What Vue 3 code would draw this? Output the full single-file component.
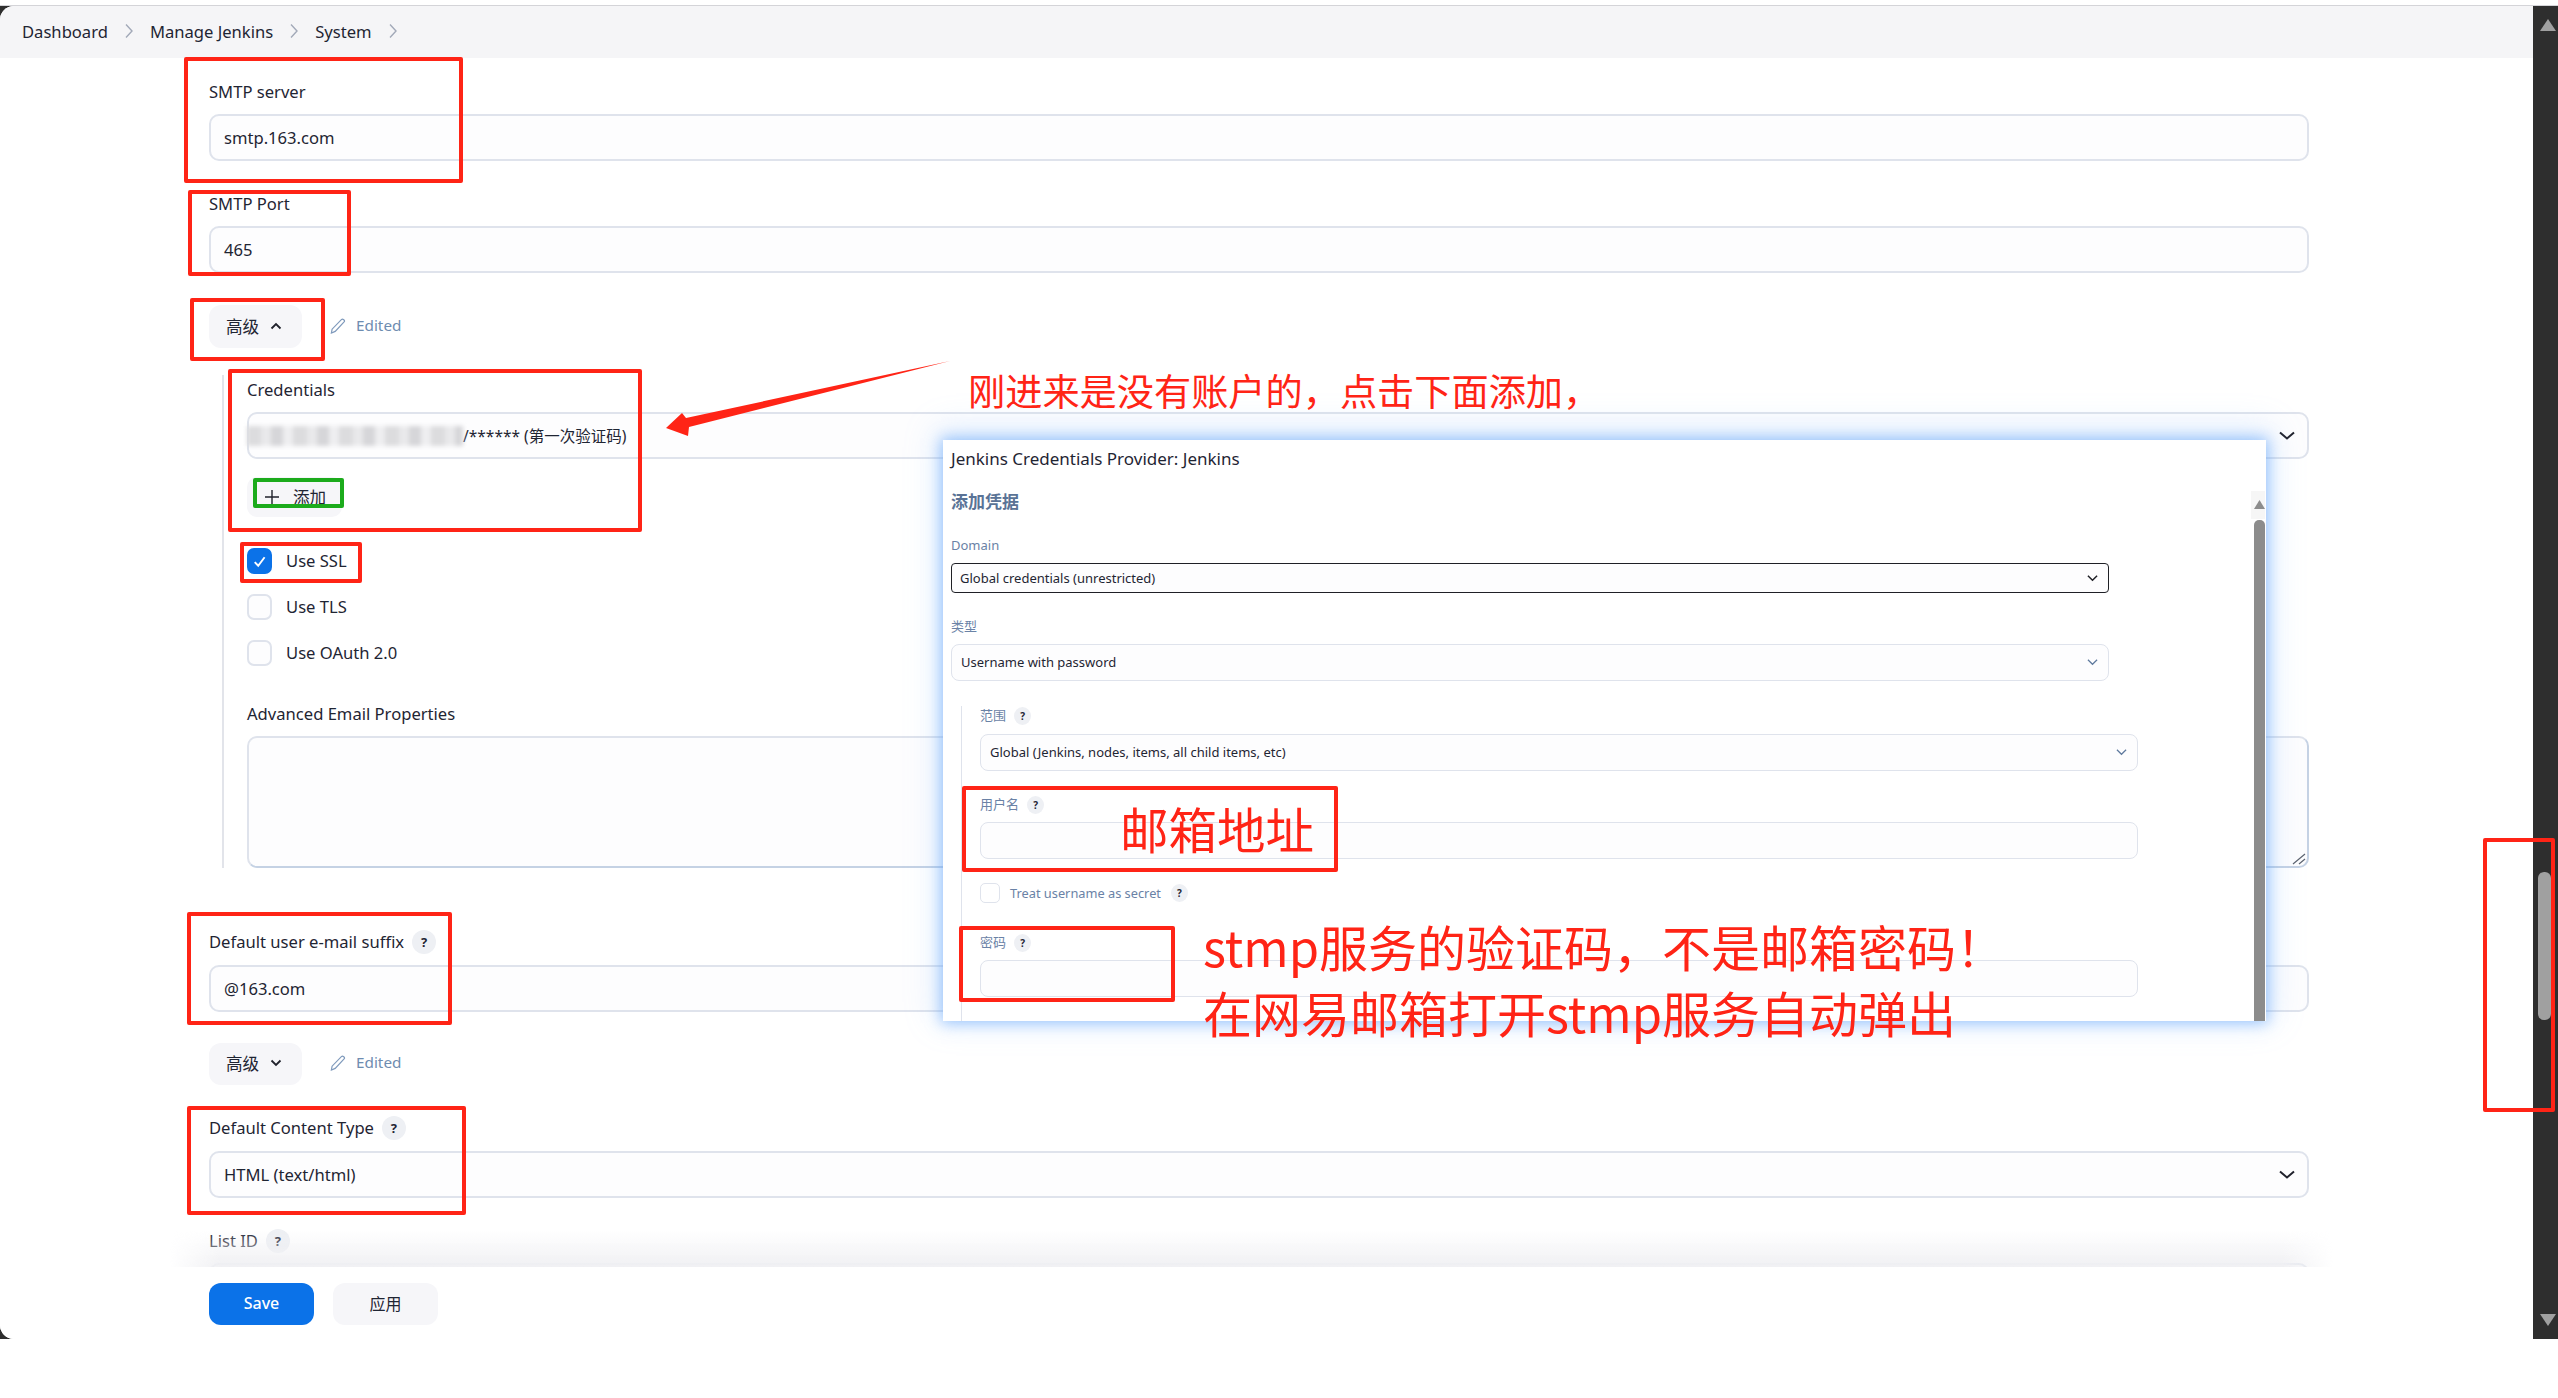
<script setup>
const crumbs = ['Dashboard', 'Manage Jenkins', 'System']
const boxes = ['b-server', 'b-port', 'b-adv', 'b-cred', 'b-ssl', 'b-suffix', 'b-type', 'b-user', 'b-pass', 'b-scroll']
</script>

<template>
  <div class="screen">
    <div class="window">
      <div class="main">
        <nav class="crumbs">
          <template v-for="c in crumbs" :key="c">
            <span>{{ c }}</span>
            <svg class="crumb-sep" viewBox="0 0 8 16"><path d="M1 1.5 7 8 1 14.5" /></svg>
          </template>
        </nav>

        <div class="content">
          <div class="form">
            <section>
              <div class="label">SMTP server</div>
              <div class="input">smtp.163.com</div>
            </section>
            <section>
              <div class="label">SMTP Port</div>
              <div class="input">465</div>
            </section>

            <div class="adv-row up">
              <button class="adv">高级
                <svg viewBox="0 0 12 8"><path d="M1.5 6.5 6 2l4.5 4.5" /></svg>
              </button>
              <svg class="pencil" viewBox="0 0 16 16"><path d="M11.6 1.4c1.2-.9 3.6 1 2.7 2.3L5.2 13.4 1.4 15l.7-3.8z" /></svg>
              <span class="edited">Edited</span>
            </div>

            <div class="nested">
              <div class="label">Credentials</div>
              <div class="input select">
                <span class="cred-value"><i class="redacted"></i>/****** (第一次验证码)</span>
                <svg class="chev" viewBox="0 0 16 9"><path d="M1 1.5 8 7.5l7-6" /></svg>
              </div>
              <button class="add">
                <svg viewBox="0 0 14 14"><path d="M7 0v14M0 7h14" /></svg>
                添加
              </button>
              <label class="check first">
                <span class="box on">
                  <svg viewBox="0 0 16 16"><path d="M3.5 8.5 6.8 12l6-8" /></svg>
                </span>
                Use SSL
              </label>
              <label class="check"><span class="box"></span>Use TLS</label>
              <label class="check"><span class="box"></span>Use OAuth 2.0</label>
              <div class="label props">Advanced Email Properties</div>
              <div class="input textarea">
                <svg class="grip" viewBox="0 0 14 14"><path d="M1 13 13 3M7 13l6-5" /></svg>
              </div>
            </div>

            <section class="after-nested">
              <div class="label wide">Default user e-mail suffix <span class="help">?</span></div>
              <div class="input">@163.com</div>
            </section>

            <div class="adv-row">
              <button class="adv low">高级
                <svg viewBox="0 0 12 8"><path d="M1.5 1.5 6 6l4.5-4.5" /></svg>
              </button>
              <svg class="pencil" viewBox="0 0 16 16"><path d="M11.6 1.4c1.2-.9 3.6 1 2.7 2.3L5.2 13.4 1.4 15l.7-3.8z" /></svg>
              <span class="edited">Edited</span>
            </div>

            <section>
              <div class="label wide">Default Content Type <span class="help">?</span></div>
              <div class="input select">
                <span>HTML (text/html)</span>
                <svg class="chev" viewBox="0 0 16 9"><path d="M1 1.5 8 7.5l7-6" /></svg>
              </div>
            </section>
            <section>
              <div class="label">List ID <span class="help">?</span></div>
              <div class="input"></div>
            </section>
          </div>
        </div>

        <div class="savebar">
          <button class="btn save">Save</button>
          <button class="btn apply">应用</button>
        </div>
      </div>

      <div class="scrollbar">
        <svg viewBox="0 0 16 12"><path d="M8 0 16 12H0z" /></svg>
        <div class="track"><div class="thumb"></div></div>
        <svg viewBox="0 0 16 12"><path d="M0 0h16L8 12z" /></svg>
      </div>
    </div>

    <aside class="modal">
      <div class="m-title">Jenkins Credentials Provider: Jenkins</div>
      <div class="m-heading">添加凭据</div>
      <div class="m-label domain">Domain</div>
      <div class="m-input m-outer m-focus">
        <span>Global credentials (unrestricted)</span>
        <svg class="m-chev dark" viewBox="0 0 12 8"><path d="M1 1.5 6 6.5l5-5" /></svg>
      </div>
      <div class="m-label cjk kind">类型</div>
      <div class="m-input m-outer">
        <span>Username with password</span>
        <svg class="m-chev" viewBox="0 0 12 8"><path d="M1 1.5 6 6.5l5-5" /></svg>
      </div>
      <div class="m-nested">
        <div class="m-label cjk">范围 <span class="m-help">?</span></div>
        <div class="m-input">
          <span>Global (Jenkins, nodes, items, all child items, etc)</span>
          <svg class="m-chev" viewBox="0 0 12 8"><path d="M1 1.5 6 6.5l5-5" /></svg>
        </div>
        <div class="m-label cjk spaced">用户名 <span class="m-help">?</span></div>
        <div class="m-input"></div>
        <label class="m-check"><span class="m-box"></span>Treat username as secret <span class="m-help">?</span></label>
        <div class="m-label cjk pass">密码 <span class="m-help">?</span></div>
        <div class="m-input"></div>
      </div>
      <div class="m-scroll">
        <svg viewBox="0 0 11 9"><path d="M5.5 0 11 9H0z" /></svg>
        <div class="m-thumb"></div>
      </div>
    </aside>

    <div class="notes">
      <div v-for="b in boxes" :key="b" class="note-box" :class="b"></div>
      <div class="green-box"></div>
      <svg class="arrow" viewBox="0 0 300 80">
        <path d="M285 1 21 58l-4-5L1 68l22 8 1-9z" />
      </svg>
      <p class="note n-top">刚进来是没有账户的，点击下面添加，</p>
      <p class="note n-mail">邮箱地址</p>
      <p class="note n-code">stmp服务的验证码，不是邮箱密码！<br />在网易邮箱打开stmp服务自动弹出</p>
    </div>
  </div>
</template>

<style>
html, body { margin: 0; background: #fff; }
</style>

<style scoped>
.screen {
  position: relative;
  width: 2558px;
  height: 1398px;
  overflow: hidden;
  background: #fff;
  font-family: "Noto Sans", "Noto Sans CJK SC", sans-serif;
  font-size: 16.6px;
  color: #1f2533;
}
button { font: inherit; color: inherit; border: 0; padding: 0; }
p { margin: 0; }

.window {
  display: flex;
  height: 1333px;
  margin-top: 5px;
  background: #2e2e2e;
  border-top: 1px solid #d4d4d8;
}
.main {
  flex: 1;
  min-width: 0;
  display: flex;
  flex-direction: column;
  background: #fff;
  border-radius: 14px 0 0 14px;
  overflow: hidden;
}
.crumbs {
  flex: none;
  height: 52px;
  padding-bottom: 2px;
  box-sizing: border-box;
  display: flex;
  align-items: center;
  gap: 17px;
  padding-left: 22px;
  background: #f5f5f7;
}
.crumb-sep { width: 8px; height: 16px; fill: none; stroke: #a2a9b8; stroke-width: 1.4; }

.content {
  flex: 1;
  min-height: 0;
  overflow: hidden;
  padding: 22px 224px 0 209px;
}
.form { display: flex; flex-direction: column; gap: 31px; }
.label {
  height: 24px;
  line-height: 24px;
  margin-bottom: 10px;
  display: flex;
  align-items: center;
  gap: 8px;
}
.label.wide { margin-bottom: 11px; }
.input {
  box-sizing: border-box;
  height: 47px;
  display: flex;
  align-items: center;
  padding: 0 13px;
  background: #fdfdfe;
  border: 2px solid #dfe3ec;
  border-radius: 10px;
}
.select { justify-content: space-between; padding-right: 12px; }
.chev { width: 16px; height: 9px; fill: none; stroke: #20222c; stroke-width: 2; }
.help {
  width: 24px;
  height: 24px;
  border-radius: 50%;
  background: #eef0f4;
  font-size: 13px;
  font-weight: 700;
  text-align: center;
  line-height: 24px;
}

.adv-row { display: flex; align-items: center; height: 42px; }
.adv-row.up { margin-top: 1px; height: 43px; }
.adv {
  box-sizing: border-box;
  width: 93px;
  height: 100%;
  display: flex;
  align-items: center;
  gap: 11px;
  padding: 0 0 2px 17px;
  background: #f6f6f9;
  border-radius: 12px;
}
.adv svg { width: 12px; height: 8px; fill: none; stroke: #20222c; stroke-width: 1.8; }
.pencil { width: 16px; height: 16px; margin: -2px 0 0 28px; fill: none; stroke: #7f9abc; stroke-width: 1.2; }
.edited { margin: -4px 0 0 10px; color: #6e8cb0; font-size: 15.3px; }

.nested {
  margin: -4px 0 0 13px;
  padding: 3px 0 0 23px;
  border-left: 2px solid #e2e4ea;
}
.cred-value { display: flex; align-items: center; font-size: 15.5px; }
.redacted {
  width: 216px;
  height: 20px;
  margin-left: -15px;
  background: repeating-linear-gradient(90deg, #dcdcde 0 14px, #e9e9eb 14px 24px, #d6d6d9 24px 36px, #eeeef0 36px 46px);
  filter: blur(2px);
}
.add {
  display: flex;
  align-items: center;
  gap: 14px;
  width: 95px;
  height: 40px;
  margin-top: 18px;
  padding-left: 18px;
  background: #f6f6f9;
  border-radius: 10px;
}
.add svg { width: 14px; height: 14px; fill: none; stroke: #20222c; stroke-width: 1.4; }
.check { display: flex; align-items: center; gap: 14px; height: 26px; margin-top: 20px; line-height: 24px; }
.check.first { margin-top: 31px; }
.box {
  box-sizing: border-box;
  width: 25px;
  height: 26px;
  border: 2px solid #dfe3ec;
  border-radius: 7px;
  background: #fdfdfe;
}
.box.on { background: #0b72e8; border-color: #0b72e8; display: flex; align-items: center; justify-content: center; }
.box.on svg { width: 17px; height: 17px; fill: none; stroke: #fff; stroke-width: 1.8; }
.props { margin: 36px 0 10px; }
.textarea { height: 132px; position: relative; border-bottom-color: #c5d2e4; border-right-color: #c5d2e4; }
.grip { position: absolute; right: 1px; bottom: 1px; width: 14px; height: 14px; fill: none; stroke: #5d6470; stroke-width: 1.2; }
.after-nested { margin-top: 31px; }

.savebar {
  flex: none;
  position: relative;
  height: 72px;
  display: flex;
  gap: 19px;
  padding: 16px 0 0 209px;
  background: #fff;
  box-sizing: border-box;
}
.savebar::before {
  content: "";
  position: absolute;
  left: 170px;
  right: 200px;
  top: -36px;
  height: 36px;
  background: linear-gradient(rgba(240, 240, 243, 0), #f0f0f3);
  -webkit-mask-image: linear-gradient(90deg, transparent, #000 50px, #000 calc(100% - 50px), transparent);
  mask-image: linear-gradient(90deg, transparent, #000 50px, #000 calc(100% - 50px), transparent);
}
.btn { width: 105px; height: 42px; padding-bottom: 2px; border-radius: 12px; font-size: 16px; }
.save { background: #0b72e8; color: #fff; font-weight: 500; }
.apply { background: #f6f6f9; }

.scrollbar {
  flex: none;
  width: 25px;
  display: flex;
  flex-direction: column;
  align-items: center;
  box-sizing: border-box;
  padding: 13px 0 13px 5px;
}
.scrollbar > svg { flex: none; width: 16px; height: 12px; fill: #a0a0a0; }
.track { flex: 1; width: 100%; position: relative; }
.thumb {
  position: absolute;
  left: 0;
  top: 841px;
  width: 13px;
  height: 148px;
  border-radius: 6px;
  background: #a0a0a0;
}

.modal {
  position: absolute;
  left: 943px;
  top: 440px;
  box-sizing: border-box;
  width: 1323px;
  height: 581px;
  padding: 7px 0 0 8px;
  background: #fff;
  box-shadow: 0 0 14px 2px rgba(90, 160, 250, 0.6), 0 -6px 32px 6px rgba(130, 185, 255, 0.22);
  font-size: 13px;
}
.m-title { height: 24px; line-height: 24px; font-size: 17px; color: #1f2533; }
.m-heading { height: 26px; line-height: 26px; margin-top: 18px; font-size: 17px; font-weight: 700; color: #5a7396; }
.m-label {
  box-sizing: border-box;
  display: flex;
  align-items: center;
  gap: 8px;
  height: 20px;
  color: #6a82a6;
}
.m-label.cjk { padding-bottom: 3px; }
.m-help { margin-top: 3px; }
.domain { margin-top: 20px; margin-bottom: 8px; }
.kind { margin-top: 24px; margin-bottom: 7px; }
.m-input {
  box-sizing: border-box;
  width: 1158px;
  height: 37px;
  display: flex;
  align-items: center;
  justify-content: space-between;
  padding: 0 10px 1px 9px;
  background: #fdfdfe;
  border: 1.5px solid #dfe3ec;
  border-radius: 8px;
}
.m-focus { height: 30px; border: 1.5px solid #1f2026; border-radius: 4px; padding-left: 8px; }
.m-chev { width: 11px; height: 8px; fill: none; stroke: #5f7a9e; stroke-width: 1.3; }
.m-chev.dark { stroke: #1f2026; stroke-width: 1.6; }
.m-help {
  width: 17px;
  height: 18px;
  border-radius: 50%;
  background: #eef0f4;
  color: #1f2533;
  font-size: 10px;
  font-weight: 700;
  line-height: 18px;
  text-align: center;
}
.m-nested {
  margin: 25px 0 0 10px;
  height: 315px;
  padding-left: 18px;
  border-left: 1px solid #dfe3ec;
  box-sizing: border-box;
}
.m-nested > .m-label:first-child { margin-bottom: 8px; }
.spaced { margin-top: 24px; margin-bottom: 7px; }
.m-check { display: flex; align-items: center; gap: 10px; height: 20px; margin-top: 24px; color: #6a82a6; font-size: 12.8px; }
.m-check .m-help { margin-top: 0; }
.m-box { box-sizing: border-box; width: 20px; height: 20px; border: 1.5px solid #dfe3ec; border-radius: 5px; }
.pass { margin-top: 30px; margin-bottom: 7px; }
.m-scroll {
  position: absolute;
  right: 1px;
  top: 51px;
  bottom: 0;
  width: 14px;
  display: flex;
  flex-direction: column;
  align-items: flex-end;
  background: linear-gradient(#f6f6f6, #f6f6f6) no-repeat 0 0 / 100% 28px;
}
.m-scroll svg { width: 11px; height: 9px; margin-top: 9px; fill: #8c8c8c; }
.m-thumb { flex: 1; width: 11px; margin-top: 11px; background: #8c8c8c; border-radius: 5px 5px 0 0; }

.notes { position: absolute; inset: 0; pointer-events: none; }
.note-box {
  position: absolute;
  box-sizing: border-box;
  border: 4px solid #ff2416;
  border-radius: 2px;
}
.b-server { left: 184px; top: 57px; width: 279px; height: 126px; }
.b-port { left: 188px; top: 190px; width: 163px; height: 86px; }
.b-adv { left: 190px; top: 298px; width: 135px; height: 63px; }
.b-cred { left: 228px; top: 369px; width: 414px; height: 163px; }
.b-ssl { left: 240px; top: 542px; width: 122px; height: 41px; }
.b-suffix { left: 187px; top: 912px; width: 265px; height: 113px; }
.b-type { left: 187px; top: 1106px; width: 279px; height: 109px; }
.b-user { left: 962px; top: 786px; width: 376px; height: 86px; }
.b-pass { left: 959px; top: 926px; width: 216px; height: 76px; }
.b-scroll { left: 2483px; top: 838px; width: 72px; height: 274px; }
.green-box {
  position: absolute;
  left: 253px;
  top: 478px;
  width: 91px;
  height: 30px;
  box-sizing: border-box;
  border: 4px solid #1cab1c;
  border-radius: 2px;
}
.arrow { position: absolute; left: 665px; top: 360px; width: 300px; height: 80px; fill: #ff2416; }
.note { position: absolute; color: #ff2416; white-space: nowrap; font-family: "Noto Sans CJK SC", "Noto Sans", sans-serif; }
.n-top { left: 968px; top: 362px; font-size: 37.2px; line-height: 56px; }
.n-mail { left: 1120px; top: 794px; font-size: 48.5px; line-height: 68px; }
.n-code { left: 1203px; top: 913px; font-size: 49px; line-height: 66px; }
</style>
